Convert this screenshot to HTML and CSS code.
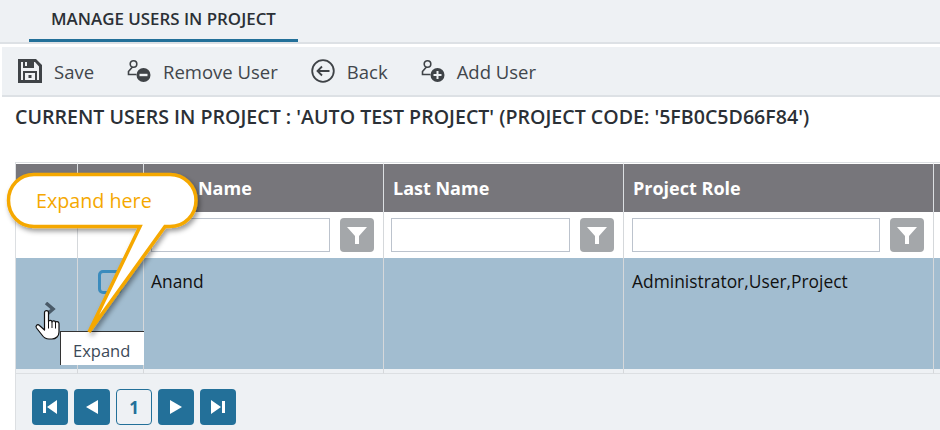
FILE: index.html
```html
<!DOCTYPE html>
<html lang="en">
<head>
    <meta charset="UTF-8">
    <title>Manage Users in Project</title>
    <link rel="stylesheet" href="styles.css">
</head>
<body>
    <div class="tabs">
        <div class="tab">MANAGE USERS IN PROJECT</div>
    </div>
    <div class="toolbar">
        <a class="tool">
            <svg width="24" height="24" viewBox="0 0 24 24"><path fill="#3f4347" fill-rule="evenodd" d="M0 0h18l6 6v18H0zM3 3v18h2V12h14v9h2V7.500L17 3h-1v6H5V3zM7 3v4h2V3zM7 14v7h10v-7zM10.500 16h3v3h-3z"/></svg>
            <span>Save</span>
        </a>
        <a class="tool">
            <svg width="24" height="24" viewBox="0 0 24 24"><g fill="none" stroke="#3f4347" stroke-width="1.600"><circle cx="6.500" cy="5" r="3.300"/><path d="M5 8.500L1.500 12.500v3h8"/></g><circle cx="16.500" cy="16" r="7" fill="#3f4347"/><rect x="12.500" y="14.800" width="8" height="2.400" fill="#eef1f4"/></svg>
            <span>Remove User</span>
        </a>
        <a class="tool">
            <svg width="24" height="24" viewBox="0 0 24 24"><g fill="none" stroke="#3f4347"><circle cx="12" cy="12" r="10.800" stroke-width="1.800"/><path stroke-width="1.800" d="M18.500 12H6.500M11 7.500L6.500 12l4.500 4.500"/></g></svg>
            <span>Back</span>
        </a>
        <a class="tool">
            <svg width="24" height="24" viewBox="0 0 24 24"><g fill="none" stroke="#3f4347" stroke-width="1.600"><circle cx="6.500" cy="5" r="3.300"/><path d="M5 8.500L1.500 12.500v3h8"/></g><circle cx="16.500" cy="16" r="7" fill="#3f4347"/><path stroke="#eef1f4" stroke-width="2" d="M12.500 16h8M16.500 12v8"/></svg>
            <span>Add User</span>
        </a>
    </div>
    <h1 class="title">CURRENT USERS IN PROJECT : 'AUTO TEST PROJECT' (PROJECT CODE: '5FB0C5D66F84')</h1>

    <div class="grid">
        <table>
            <colgroup>
                <col class="col-expand"><col class="col-check"><col class="col-name"><col class="col-name"><col class="col-role"><col>
            </colgroup>
            <tr class="head">
                <th></th><th></th><th>First Name</th><th>Last Name</th><th>Project Role</th><th></th>
            </tr>
            <tr class="filters">
                <td></td>
                <td></td>
                <td><div class="filter"><input type="text"><button><svg width="24" height="24" viewBox="0 0 24 24"><path fill="#fff" d="M2 4h20l-8 9v8h-4v-8z"/></svg></button></div></td>
                <td><div class="filter"><input type="text"><button><svg width="24" height="24" viewBox="0 0 24 24"><path fill="#fff" d="M2 4h20l-8 9v8h-4v-8z"/></svg></button></div></td>
                <td class="role-cell"><div class="filter"><input type="text"><button><svg width="24" height="24" viewBox="0 0 24 24"><path fill="#fff" d="M2 4h20l-8 9v8h-4v-8z"/></svg></button></div></td>
                <td></td>
            </tr>
            <tr class="row">
                <td class="expand-cell"><svg width="12" height="14" viewBox="0 0 12 14"><path fill="none" stroke="#4a5a68" stroke-width="3.500" d="M2 1l7 6-7 6"/></svg></td>
                <td class="check-cell"><div class="check"></div></td>
                <td>Anand</td>
                <td></td>
                <td class="role-cell">Administrator,User,Project</td>
                <td></td>
            </tr>
            <tr class="tail"><td></td><td></td><td></td><td></td><td></td><td></td></tr>
        </table>
        <div class="pager">
            <button class="page"><svg width="16" height="16" viewBox="0 0 16 16"><path fill="#fff" d="M1 2h3v12H1zM15 1v14L5 8z"/></svg></button>
            <button class="page"><svg width="16" height="16" viewBox="0 0 16 16"><path fill="#fff" d="M14 1v14L2 8z"/></svg></button>
            <button class="page current">1</button>
            <button class="page"><svg width="16" height="16" viewBox="0 0 16 16"><path fill="#fff" d="M2 1v14l12-7z"/></svg></button>
            <button class="page"><svg width="16" height="16" viewBox="0 0 16 16"><path fill="#fff" d="M1 1v14l10-7zM12 2h3v12h-3z"/></svg></button>
        </div>
    </div>

    <!-- overlays from the annotated screenshot -->
    <div class="tooltip">Expand</div>
    <svg class="callout" width="210" height="180" viewBox="0 0 210 180">
        <defs>
            <filter id="drop" x="-10%" y="-10%" width="125%" height="125%"><feDropShadow dx="2" dy="3" stdDeviation="2.500" flood-color="#000" flood-opacity="0.4"/></filter>
        </defs>
        <path filter="url(#drop)" fill="#fff" stroke="#f5a800" stroke-width="3.500" d="M34 4.500h136c14.500 0 26 11.500 26 26s-11.500 26-26 26h-5L89 162l51-105.500H34C19.500 56.500 8.500 45 8.500 30.500S19.500 4.500 34 4.500z"/>
    </svg>
    <div class="callout-text">Expand here</div>
    <svg class="cursor" width="30" height="34" viewBox="0 0 30 34"><path fill="#fff" stroke="#111" stroke-width="1.200" stroke-linejoin="round" d="M10.500 4.500c0-2.500 4-2.500 4 0v9c0-1.500 3.500-1.500 3.500.5 0-1.500 3.500-1.500 3.500.5 0-1.500 3.500-1 3.500 1V24c0 4-3 7-7 7h-3c-3 0-5-1-7-4L2.500 20c-1.500-2 1-4.500 3-2.500l5 4.500z"/><path stroke="#111" fill="none" d="M14.500 13.500v7M18 14v6M21.500 14.500v6"/></svg>
</body>
</html>
```

FILE: styles.css
```css
* { box-sizing: border-box; }
html, body { height: 100%; }
body { margin: 0; width: 940px; height: 430px; overflow: hidden; background: white; font-family: "Open Sans", sans-serif; color: #2b3036; position: relative; }

.tabs { height: 44px; padding-left: 29px; background: #eef1f4; border-bottom: 2px solid #dde1e5; }
.tab { width: 269px; height: 42px; padding: 8px 0 0 22px; font-size: 16.9px; font-weight: 600; line-height: 22px; border-bottom: 3px solid #237099; white-space: nowrap; }

.toolbar { display: flex; align-items: center; gap: 33px; height: 50px; margin: 3px 0 0 2px; padding-left: 16px; background: #eef1f4; border-bottom: 2px solid #dde1e5; }
.tool { display: flex; align-items: center; gap: 12px; font-size: 18.5px; color: #41464c; }

.title { margin: 8px 0 0 15px; font-size: 19.6px; font-weight: 600; line-height: 24px; white-space: nowrap; }

.grid { width: 940px; margin: 33px 0 0 15px; border-left: 1px solid #dcdfe2; background: #eef1f4; height: 268px; }
table { border-collapse: separate; border-spacing: 0; table-layout: fixed; width: 925px; background: white; border-top: 1px solid #dcdfe2; }
.col-expand { width: 61px; }
.col-check { width: 66px; }
.col-name { width: 240px; }
.col-role { width: 310px; }
th, td { padding: 0; border-left: 1px solid #d5d8db; }
th:first-child, td:first-child { border-left: 0; }

.head th { height: 49px; background: #77767b; border-top: 1px solid white; border-left-color: #dcdfe2; color: white; font-size: 18px; line-height: 46px; font-weight: 700; text-align: left; padding-left: 9px; }
.filters td { height: 46px; padding: 0 7px; }
.filters td.role-cell { padding-left: 8px; }
.filter { display: flex; gap: 10px; padding-right: 2px; }
.filter input { flex: 1; min-width: 0; height: 34px; border: 1px solid #bcc3cd; background: white; }
.filter button { width: 34px; height: 34px; padding: 0; border: 0; border-radius: 4px; background: #a4a7aa; display: flex; align-items: center; justify-content: center; }

.row td { height: 111px; background: #a2bdd0; color: #111; font-size: 17.4px; line-height: 22px; vertical-align: top; padding: 12px 7px 0; }
.row td.role-cell { padding-left: 8px; }
.row td.expand-cell { padding: 40px 0 0 28px; }
.row td.check-cell { padding: 12px 0 0 20px; }
.check { width: 24px; height: 24px; border: 3px solid #3a8bbd; border-radius: 5px; }
.tail td { height: 5px; background: #eef1f4; border-bottom: 1px solid #dcdfe2; }

.pager { display: flex; gap: 6px; padding: 15px 0 0 16px; }
.page { width: 36px; height: 36px; padding: 0; border: 0; border-radius: 4px; background: #237099; display: flex; align-items: center; justify-content: center; }
.page.current { background: #eef1f4; border: 1px solid #237099; color: #237099; font-family: "Open Sans", sans-serif; font-size: 17px; font-weight: 700; }

.tooltip { position: absolute; left: 60px; top: 331px; width: 84px; height: 34px; padding: 8px 0 0 12px; background: white; border-top: 1px solid #333; border-left: 1px solid #333; font-size: 16.5px; line-height: 22px; color: #3c4a58; }
.callout { position: absolute; left: 0; top: 170px; }
.callout-text { position: absolute; left: 36px; top: 189px; font-size: 19.7px; line-height: 24px; color: #f5a800; }
.cursor { position: absolute; left: 34px; top: 308px; }
```
